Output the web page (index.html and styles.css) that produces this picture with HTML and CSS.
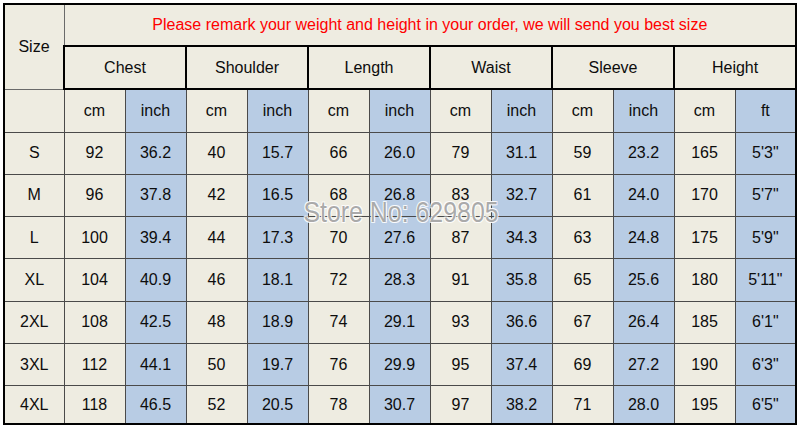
FILE: index.html
```html
<!DOCTYPE html>
<html>
<head>
<meta charset="utf-8">
<link rel="stylesheet" href="styles.css">
</head>
<body>
<div class="wrap">
<table class="sizes">
  <colgroup>
    <col class="first"><col class="c"><col class="c"><col class="c"><col class="c"><col class="c"><col class="c"><col class="c"><col class="c"><col class="c"><col class="c"><col class="c"><col class="c">
  </colgroup>
  <tr class="r1">
    <td class="size-h" rowspan="2">Size</td>
    <td class="note" colspan="12">Please remark your weight and height in your order, we will send you best size</td>
  </tr>
  <tr class="r2">
    <td class="grp" colspan="2">Chest</td>
    <td class="grp" colspan="2">Shoulder</td>
    <td class="grp" colspan="2">Length</td>
    <td class="grp" colspan="2">Waist</td>
    <td class="grp" colspan="2">Sleeve</td>
    <td class="grp" colspan="2">Height</td>
  </tr>
  <tr class="r3">
    <td></td>
    <td>cm</td><td class="b">inch</td>
    <td>cm</td><td class="b">inch</td>
    <td>cm</td><td class="b">inch</td>
    <td>cm</td><td class="b">inch</td>
    <td>cm</td><td class="b">inch</td>
    <td>cm</td><td class="b">ft</td>
  </tr>
  <tr class="d"><td>S</td><td>92</td><td class="b">36.2</td><td>40</td><td class="b">15.7</td><td>66</td><td class="b">26.0</td><td>79</td><td class="b">31.1</td><td>59</td><td class="b">23.2</td><td>165</td><td class="b">5'3"</td></tr>
  <tr class="d"><td>M</td><td>96</td><td class="b">37.8</td><td>42</td><td class="b">16.5</td><td>68</td><td class="b">26.8</td><td>83</td><td class="b">32.7</td><td>61</td><td class="b">24.0</td><td>170</td><td class="b">5'7"</td></tr>
  <tr class="d"><td>L</td><td>100</td><td class="b">39.4</td><td>44</td><td class="b">17.3</td><td>70</td><td class="b">27.6</td><td>87</td><td class="b">34.3</td><td>63</td><td class="b">24.8</td><td>175</td><td class="b">5'9"</td></tr>
  <tr class="d"><td>XL</td><td>104</td><td class="b">40.9</td><td>46</td><td class="b">18.1</td><td>72</td><td class="b">28.3</td><td>91</td><td class="b">35.8</td><td>65</td><td class="b">25.6</td><td>180</td><td class="b">5'11"</td></tr>
  <tr class="d"><td>2XL</td><td>108</td><td class="b">42.5</td><td>48</td><td class="b">18.9</td><td>74</td><td class="b">29.1</td><td>93</td><td class="b">36.6</td><td>67</td><td class="b">26.4</td><td>185</td><td class="b">6'1"</td></tr>
  <tr class="d"><td>3XL</td><td>112</td><td class="b">44.1</td><td>50</td><td class="b">19.7</td><td>76</td><td class="b">29.9</td><td>95</td><td class="b">37.4</td><td>69</td><td class="b">27.2</td><td>190</td><td class="b">6'3"</td></tr>
  <tr class="d last"><td>4XL</td><td>118</td><td class="b">46.5</td><td>52</td><td class="b">20.5</td><td>78</td><td class="b">30.7</td><td>97</td><td class="b">38.2</td><td>71</td><td class="b">28.0</td><td>195</td><td class="b">6'5"</td></tr>
</table>
<div class="watermark">Store No: 629805</div>
</div>
</body>
</html>
```

FILE: styles.css
```css
html, body {
  margin: 0;
  padding: 0;
  background: #ffffff;
}
.wrap {
  position: relative;
  width: 800px;
  height: 428px;
  padding: 3px 0 0 3px;
  box-sizing: border-box;
}
.sizes {
  border-collapse: collapse;
  table-layout: fixed;
  width: 792px;
  border: 2px solid #000;
  font-family: "Liberation Sans", Arial, sans-serif;
  font-size: 16px;
  color: #0d0d0d;
}
.sizes col.first {
  width: 60px;
}
.sizes col.c {
  width: 61px;
}
.sizes td {
  background: #eeece1;
  border: 1px solid #4a4a4a;
  text-align: center;
  vertical-align: middle;
  padding: 0;
  white-space: nowrap;
}
.sizes td.b {
  background: #b8cce4;
}
.sizes .r1 { height: 42px; }
.sizes .r2 { height: 43px; }
.sizes .r3 { height: 43px; }
.sizes .d { height: 42.3px; }
.sizes .d.last { height: 38px; }
.sizes td.size-h {
  border-right: 1px solid #6a6a6a;
  border-bottom: 1px solid #6a6a6a;
}
.sizes td.note {
  color: #ff0000;
  border-bottom: 2px solid #000;
}
.sizes td.grp {
  border: 2px solid #000;
}
.watermark {
  position: absolute;
  left: 401px;
  top: 212px;
  transform: translate(-50%, -50%) scaleX(0.83);
  font-family: "Liberation Sans", Arial, sans-serif;
  font-size: 30px;
  color: rgba(155, 155, 155, 0.85);
  text-shadow: 1px 1px 0 rgba(255,255,255,0.8), -1px -1px 0 rgba(255,255,255,0.8), 1px -1px 0 rgba(255,255,255,0.8), -1px 1px 0 rgba(255,255,255,0.8);
  white-space: nowrap;
  pointer-events: none;
}
```
